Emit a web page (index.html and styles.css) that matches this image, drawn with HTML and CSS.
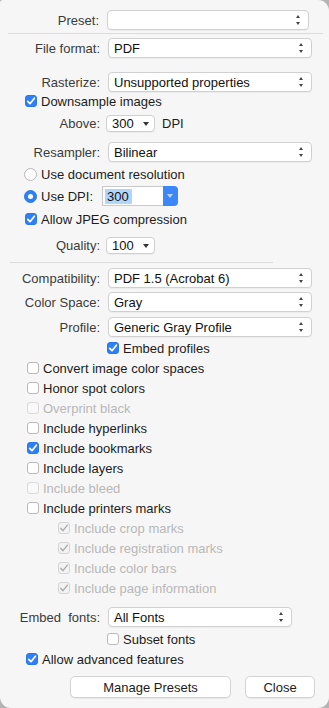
FILE: index.html
```html
<!DOCTYPE html>
<html lang="en">
<head>
    <meta charset="UTF-8">
    <title>PDF Options</title>
    <link rel="stylesheet" href="styles.css">
</head>
<body>
    <div class="panel">
        <div class="field preset">
            <label>Preset:</label>
            <div class="popup updown"></div>
        </div>
        <div class="sep"></div>

        <div class="field gap4">
            <label>File format:</label>
            <div class="popup updown">PDF</div>
        </div>
        <div class="field gap14">
            <label>Rasterize:</label>
            <div class="popup updown">Unsupported properties</div>
        </div>
        <div class="check at25 gap1">
            <span class="box on"><svg viewBox="0 0 12 12"><path d="M2.7 6.3 L5 8.7 L9.4 3.2"/></svg></span>
            Downsample images
        </div>
        <div class="field short gap6">
            <label>Above:</label>
            <div class="popup small">300</div>
            <span class="unit">DPI</span>
        </div>
        <div class="field gap10">
            <label>Resampler:</label>
            <div class="popup updown">Bilinear</div>
        </div>
        <div class="check at24 gap4">
            <span class="radio"></span>
            Use document resolution
        </div>
        <div class="check at24 gap4 tall">
            <span class="radio on"></span>
            Use DPI:
            <div class="combo">
                <div class="combo-text"><span class="selected">300</span></div>
                <div class="combo-btn"></div>
            </div>
        </div>
        <div class="check at25 gap5">
            <span class="box on"><svg viewBox="0 0 12 12"><path d="M2.7 6.3 L5 8.7 L9.4 3.2"/></svg></span>
            Allow JPEG compression
        </div>
        <div class="field short gap10">
            <label>Quality:</label>
            <div class="popup small">100</div>
        </div>
        <div class="sep short"></div>

        <div class="field gap5">
            <label>Compatibility:</label>
            <div class="popup updown">PDF 1.5 (Acrobat 6)</div>
        </div>
        <div class="field gap4">
            <label>Color Space:</label>
            <div class="popup updown">Gray</div>
        </div>
        <div class="field gap5">
            <label>Profile:</label>
            <div class="popup updown">Generic Gray Profile</div>
        </div>
        <div class="check at107 gap3">
            <span class="box on"><svg viewBox="0 0 12 12"><path d="M2.7 6.3 L5 8.7 L9.4 3.2"/></svg></span>
            Embed profiles
        </div>

        <div class="check at27 gap4"><span class="box"></span>Convert image color spaces</div>
        <div class="check at27 gap4"><span class="box"></span>Honor spot colors</div>
        <div class="check at27 gap4 off"><span class="box"></span>Overprint black</div>
        <div class="check at27 gap4"><span class="box"></span>Include hyperlinks</div>
        <div class="check at27 gap4">
            <span class="box on"><svg viewBox="0 0 12 12"><path d="M2.7 6.3 L5 8.7 L9.4 3.2"/></svg></span>
            Include bookmarks
        </div>
        <div class="check at27 gap4"><span class="box"></span>Include layers</div>
        <div class="check at27 gap4 off"><span class="box"></span>Include bleed</div>
        <div class="check at27 gap4"><span class="box"></span>Include printers marks</div>

        <div class="check at58 gap4 off">
            <span class="box on"><svg viewBox="0 0 12 12"><path d="M2.7 6.3 L5 8.7 L9.4 3.2"/></svg></span>
            Include crop marks
        </div>
        <div class="check at58 gap4 off">
            <span class="box on"><svg viewBox="0 0 12 12"><path d="M2.7 6.3 L5 8.7 L9.4 3.2"/></svg></span>
            Include registration marks
        </div>
        <div class="check at58 gap4 off">
            <span class="box on"><svg viewBox="0 0 12 12"><path d="M2.7 6.3 L5 8.7 L9.4 3.2"/></svg></span>
            Include color bars
        </div>
        <div class="check at58 gap4 off">
            <span class="box on"><svg viewBox="0 0 12 12"><path d="M2.7 6.3 L5 8.7 L9.4 3.2"/></svg></span>
            Include page information
        </div>

        <div class="field gap11">
            <label class="fonts">Embed  fonts:</label>
            <div class="popup updown narrow">All Fonts</div>
        </div>
        <div class="check at107 gap4"><span class="box"></span>Subset fonts</div>
        <div class="check at26 gap4">
            <span class="box on"><svg viewBox="0 0 12 12"><path d="M2.7 6.3 L5 8.7 L9.4 3.2"/></svg></span>
            Allow advanced features
        </div>

        <div class="buttons">
            <button type="button" class="btn wide">Manage Presets</button>
            <button type="button" class="btn">Close</button>
        </div>
    </div>
</body>
</html>
```

FILE: styles.css
```css
* {
    margin: 0;
    padding: 0;
    box-sizing: border-box;
}

body {
    background: #b4b4b4;
    font-family: 'Liberation Sans', Arial, sans-serif;
    font-size: 13px;
    color: #1c1c1c;
}

.panel {
    width: 329px;
    height: 708px;
    background: #f6f6f6;
    border-radius: 3px 11px 11px 11px;
    display: flex;
    flex-direction: column;
    padding-top: 10px;
    overflow: hidden;
}

/* spacing helpers */
.gap1 { margin-top: 1px; }
.gap3 { margin-top: 3px; }
.gap4 { margin-top: 4px; }
.gap5 { margin-top: 5px; }
.gap6 { margin-top: 6px; }
.gap10 { margin-top: 10px; }
.gap11 { margin-top: 11px; }
.gap14 { margin-top: 14px; }

.sep {
    flex: none;
    height: 1px;
    background: #dcdcdc;
    margin: 3px 6px 0 8px;
}

.sep.short {
    margin: 8px 56px 0 10px;
}

/* label + popup rows */
.field {
    flex: none;
    display: flex;
    align-items: center;
    height: 20px;
}

.field.short {
    height: 17px;
}

.field label {
    width: 100px;
    text-align: right;
    color: #3b3b3b;
}

.preset label {
    width: 99px;
}

.field label.fonts {
    white-space: pre;
}

.popup {
    position: relative;
    margin-left: 8px;
    width: 204px;
    height: 20px;
    padding-left: 5px;
    display: flex;
    align-items: center;
    background: #fff;
    border: 1px solid #d0d0d0;
    border-radius: 4px;
    box-shadow: 0 1px 0 rgba(0, 0, 0, 0.04);
    color: #111;
}

.preset .popup {
    width: 202px;
}

.popup.narrow {
    width: 184px;
}

.updown::before,
.updown::after {
    content: '';
    position: absolute;
    right: 8px;
    border-left: 2.5px solid transparent;
    border-right: 2.5px solid transparent;
}

.updown::before {
    top: 4px;
    border-bottom: 3px solid #444;
}

.updown::after {
    bottom: 4px;
    border-top: 3px solid #444;
}

.popup.small {
    margin-left: 6px;
    width: 49px;
    height: 17px;
}

.popup.small::after {
    content: '';
    position: absolute;
    right: 5px;
    top: 6px;
    border-left: 3px solid transparent;
    border-right: 3px solid transparent;
    border-top: 4px solid #333;
}

.unit {
    margin-left: 7px;
}

/* checkbox and radio rows */
.check {
    flex: none;
    display: flex;
    align-items: center;
    gap: 4px;
    height: 16px;
    white-space: nowrap;
}

.check.tall {
    height: 20px;
}

.at24 { padding-left: 24px; }
.at25 { padding-left: 25px; }
.at26 { padding-left: 26px; }
.at27 { padding-left: 27px; }
.at58 { padding-left: 58px; }
.at107 { padding-left: 107px; }

.box {
    flex: none;
    width: 12px;
    height: 12px;
    border: 1px solid #b9b9b9;
    border-radius: 3px;
    background: #fff;
    display: flex;
}

.box svg {
    width: 12px;
    height: 12px;
    margin: -1px;
}

.box path {
    fill: none;
    stroke: #fff;
    stroke-width: 1.7;
    stroke-linecap: round;
    stroke-linejoin: round;
}

.box.on {
    background: #2f7ff7;
    border-color: #2a78ee;
}

.check.off {
    color: #b8b8b8;
}

.check.off .box {
    border-color: #dadada;
    background: #f9f9f9;
}

.check.off .box.on {
    background: #f3f3f3;
    border-color: #d4d4d4;
}

.check.off .box path {
    stroke: #a9a9a9;
    stroke-width: 1.3;
}

.radio {
    flex: none;
    position: relative;
    width: 13px;
    height: 13px;
    border-radius: 50%;
    border: 1px solid #b9b9b9;
    background: #fff;
}

.radio.on {
    background: #2f7ff7;
    border-color: #2a78ee;
}

.radio.on::after {
    content: '';
    position: absolute;
    left: 3px;
    top: 3px;
    width: 5px;
    height: 5px;
    border-radius: 50%;
    background: #fff;
}

/* combo box for DPI */
.combo {
    display: flex;
    height: 20px;
    margin-left: 5px;
}

.combo-text {
    width: 61px;
    height: 20px;
    background: #fff;
    border: 1px solid #c9c9c9;
    border-right: none;
    padding: 2px 0 0 2px;
}

.selected {
    display: inline-block;
    background: #b2d5fc;
    padding: 0 3px 0 2px;
    line-height: 15px;
    color: #111;
}

.combo-btn {
    position: relative;
    width: 15px;
    height: 20px;
    background: #3b87f7;
    border-radius: 0 4px 4px 0;
}

.combo-btn::after {
    content: '';
    position: absolute;
    left: 4px;
    top: 8px;
    border-left: 3.5px solid transparent;
    border-right: 3.5px solid transparent;
    border-top: 4px solid rgba(255, 255, 255, 0.65);
}

/* bottom buttons */
.buttons {
    flex: none;
    display: flex;
    gap: 14px;
    margin-top: 9px;
    padding-left: 70px;
}

.btn {
    width: 70px;
    height: 22px;
    background: #fff;
    border: 1px solid #d3d3d3;
    border-radius: 5px;
    box-shadow: 0 1px 0 rgba(0, 0, 0, 0.06);
    font-family: inherit;
    font-size: 13px;
    color: #1c1c1c;
}

.btn.wide {
    width: 161px;
}
```
